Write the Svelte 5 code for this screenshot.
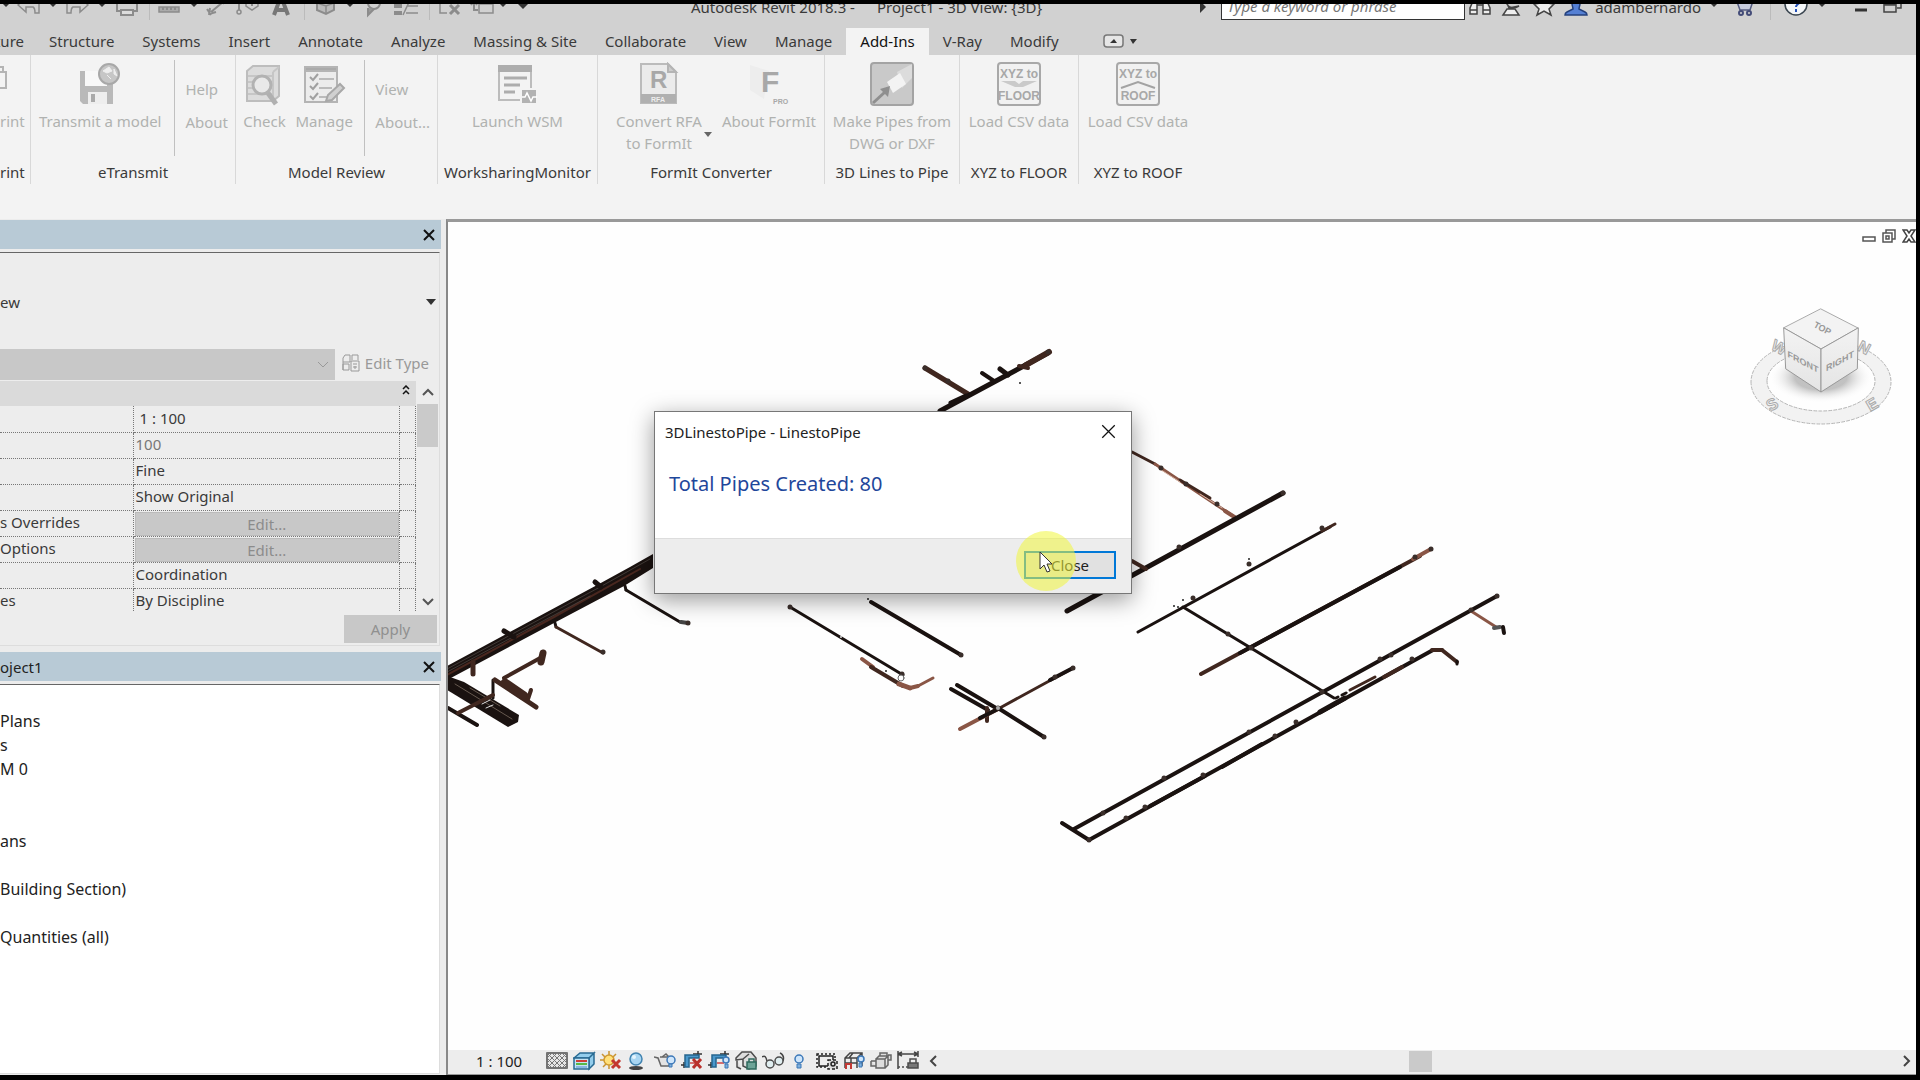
<script>
	const quickTools = [
		{ name: 'caret', width: 12, label: 'Save options' },
		{ name: 'undo', width: 34, label: 'Undo' },
		{ name: 'caret', width: 14, label: 'Undo list' },
		{ name: 'redo', width: 34, label: 'Redo' },
		{ name: 'caret', width: 16, label: 'Redo list' },
		{ name: 'print', width: 34, label: 'Print' },
		{ name: 'rule', width: 10 },
		{ name: 'measure', width: 30, label: 'Measure' },
		{ name: 'caret', width: 20, label: 'Measure options' },
		{ name: 'dimension', width: 22, label: 'Aligned dimension' },
		{ name: 'tag', width: 42, label: 'Tag by category' },
		{ name: 'letter', width: 26, label: 'Text' },
		{ name: 'rule', width: 20 },
		{ name: 'cube', width: 24, label: 'Default 3D view' },
		{ name: 'caret', width: 24, label: '3D view options' },
		{ name: 'section', width: 22, label: 'Section' },
		{ name: 'thin', width: 44, label: 'Thin lines' },
		{ name: 'rule', width: 2 },
		{ name: 'closeHidden', width: 40, label: 'Close hidden windows' },
		{ name: 'switch', width: 24, label: 'Switch windows' },
		{ name: 'caret', width: 18, label: 'Window list' },
		{ name: 'bigCaret', width: 22, label: 'Customize toolbar' }
	];

	const tabs = [
		'Structure',
		'Systems',
		'Insert',
		'Annotate',
		'Analyze',
		'Massing & Site',
		'Collaborate',
		'View',
		'Manage',
		'Add-Ins',
		'V-Ray',
		'Modify'
	];
	let activeTab = $state('Add-Ins');

	const panels = [
		{ title: 'rint', width: 31, cut: true, tools: [{ icon: 'batch', lines: ['rint'] }] },
		{
			title: 'eTransmit',
			width: 205,
			tools: [{ icon: 'floppy', lines: ['Transmit a model'] }],
			links: ['Help', 'About']
		},
		{
			title: 'Model Review',
			width: 202,
			tools: [
				{ icon: 'check', lines: ['Check'] },
				{ icon: 'manage', lines: ['Manage'] }
			],
			links: ['View', 'About...']
		},
		{ title: 'WorksharingMonitor', width: 160, tools: [{ icon: 'wsm', lines: ['Launch WSM'] }] },
		{
			title: 'FormIt Converter',
			width: 227,
			tools: [
				{ icon: 'rfa', lines: ['Convert RFA', 'to FormIt'], menu: true },
				{ icon: 'formit', lines: ['About FormIt'] }
			]
		},
		{
			title: '3D Lines to Pipe',
			width: 135,
			tools: [{ icon: 'pipe', lines: ['Make Pipes from', 'DWG or DXF'] }]
		},
		{ title: 'XYZ to FLOOR', width: 119, tools: [{ icon: 'floor', lines: ['Load CSV data'] }] },
		{ title: 'XYZ to ROOF', width: 118, last: true, tools: [{ icon: 'roof', lines: ['Load CSV data'] }] }
	];

	const properties = [
		{ label: '', value: '1 : 100', inset: true },
		{ label: '', value: '100', muted: true },
		{ label: '', value: 'Fine' },
		{ label: '', value: 'Show Original' },
		{ label: 's Overrides', edit: true },
		{ label: 'Options', edit: true },
		{ label: '', value: 'Coordination' },
		{ label: 'es', value: 'By Discipline' }
	];

	const tree = ['', 'Plans', 's', 'M 0', '', '', 'ans', '', 'Building Section)', '', 'Quantities (all)'];

	const viewControls = [
		'detail',
		'style',
		'sun',
		'shadow',
		'render',
		'cropOff',
		'crop',
		'locked',
		'glasses',
		'reveal',
		'worksharing',
		'analytical',
		'displace',
		'constraints'
	];

	// [x1, y1, x2, y2, thickness, colour]
	const dark = '#1a1210';
	const brown = '#40271f';
	const rust = '#8a5646';
	const pipes = [
		[925, 368, 968, 394, 5, brown],
		[940, 411, 1048, 353, 5, dark],
		[1026, 365, 1049, 352, 6, brown],
		[982, 373, 994, 381, 4, dark],
		[1000, 369, 1008, 375, 5, dark],
		[951, 403, 966, 396, 5, dark],
		[1019, 366, 1028, 368, 4, brown],
		[595, 582, 601, 587, 5, dark],
		[504, 631, 514, 637, 5, dark],
		[625, 586, 626, 590, 3, dark],
		[626, 590, 680, 622, 3, dark],
		[681, 622, 688, 623, 4, '#444'],
		[555, 623, 556, 627, 3, dark],
		[556, 627, 603, 653, 3, brown],
		[473, 662, 473, 674, 5, brown],
		[543, 653, 541, 662, 7, brown],
		[542, 657, 504, 678, 4, brown],
		[493, 680, 493, 698, 3, dark],
		[495, 680, 536, 707, 5, brown],
		[505, 683, 524, 696, 9, brown],
		[528, 699, 531, 690, 4, brown],
		[448, 708, 477, 725, 4, dark],
		[458, 713, 493, 695, 4, brown],
		[790, 607, 903, 675, 3, dark],
		[871, 602, 961, 655, 4, dark],
		[862, 659, 873, 667, 4, rust],
		[871, 667, 903, 686, 4, brown],
		[899, 684, 910, 688, 5, rust],
		[910, 688, 918, 686, 4, rust],
		[918, 686, 933, 678, 3, rust],
		[951, 689, 988, 710, 4, dark],
		[957, 685, 996, 708, 4, dark],
		[987, 708, 987, 721, 4, brown],
		[960, 729, 998, 709, 4, rust],
		[980, 718, 998, 709, 4, dark],
		[998, 709, 1073, 668, 3, brown],
		[1050, 680, 1073, 668, 4, dark],
		[998, 708, 1044, 737, 4, dark],
		[1132, 452, 1155, 464, 3, brown],
		[1155, 464, 1236, 518, 3, rust],
		[1180, 480, 1210, 498, 3, brown],
		[1225, 511, 1236, 518, 4, rust],
		[1067, 611, 1283, 493, 5, dark],
		[1132, 561, 1146, 569, 4, brown],
		[1138, 632, 1330, 527, 3, dark],
		[1322, 531, 1335, 524, 3, brown],
		[1201, 674, 1420, 556, 4, brown],
		[1240, 653, 1400, 567, 4, dark],
		[1413, 559, 1431, 549, 4, rust],
		[1183, 607, 1334, 698, 3, dark],
		[1336, 698, 1338, 697, 3, dark],
		[1342, 695, 1346, 693, 3, dark],
		[1350, 690, 1375, 677, 3, brown],
		[1074, 829, 1497, 596, 4, dark],
		[1062, 823, 1089, 840, 4, dark],
		[1089, 840, 1433, 650, 4, dark],
		[1150, 806, 1205, 776, 4, dark],
		[1222, 767, 1262, 744, 4, dark],
		[1320, 712, 1345, 698, 5, dark],
		[1384, 677, 1402, 667, 4, brown],
		[1432, 650, 1442, 650, 4, brown],
		[1442, 650, 1457, 662, 4, brown],
		[1457, 661, 1457, 664, 3, dark],
		[1471, 611, 1496, 627, 3, rust],
		[1494, 628, 1500, 627, 4, '#555'],
		[1503, 627, 1504, 633, 4, dark]
	];
	const fittings = [
		[925, 368], [1048, 352], [948, 381], [688, 623], [603, 652], [790, 607], [961, 655], [902, 674],
		[998, 708], [1044, 737], [1073, 668], [1055, 677], [1161, 468], [1186, 484], [1217, 504], [1283, 493],
		[1179, 547], [1249, 564], [1322, 528], [1193, 598], [1228, 634], [1251, 648], [1431, 549], [1415, 557],
		[1322, 692], [1380, 659], [1391, 655], [1497, 596], [1471, 610], [1164, 778], [1249, 732], [1103, 813],
		[1296, 722], [1275, 736], [1203, 775], [1145, 807], [1126, 818], [1089, 840], [1412, 659]
	];
	const specks = [[1020, 383], [868, 599], [1183, 600], [1174, 606], [886, 671], [1178, 607], [1249, 559]];

	let dialogOpen = $state(true);
</script>

{#snippet cross(size, weight)}
	<svg width={size} height={size} viewBox="0 0 12 12" aria-hidden="true">
		<path d="M1 1l10 10M11 1L1 11" fill="none" stroke="#111" stroke-width={weight} />
	</svg>
{/snippet}

{#snippet quickIcon(name)}
	{#if name === 'caret' || name === 'bigCaret'}
		<svg width="12" height="26" viewBox="0 0 12 26">
			<path d={name === 'caret' ? 'M2 9h8l-4 4z' : 'M0 9h12l-6 6z'} fill="#333" />
		</svg>
	{:else}
		<svg width="24" height="26" viewBox="0 0 24 26" fill="none" stroke="#8c8c8c" stroke-width="2">
			{#if name === 'undo'}
				<path d="M8 4l-7 7 8 7v-5h7c2 1 2 4 2 6h4V9H9z" stroke-width="1.5" />
			{:else if name === 'redo'}
				<path d="M16 4l7 7-8 7v-5H8c-2 1-2 4-2 6H2V9h13z" stroke-width="1.5" />
			{:else if name === 'print'}
				<path d="M5 8V3h14v5M2 8h20v9H2z" /><path d="M6 16h12v5H6z" fill="#ddd" />
			{:else if name === 'measure'}
				<path d="M2 13h20v5H2z" fill="#aaa" stroke-width="1.5" /><path d="M2 8h20M6 13v3M10 13v3M14 13v3M18 13v3" />
			{:else if name === 'dimension'}
				<path d="M20 8L8 18M6 21l1-7M6 20l7-2M18 6l3 4M4 15l4 6" />
			{:else if name === 'tag'}
				<path d="M4 16V9M4 9l5-4" /><circle cx="4" cy="18" r="2" stroke-width="1.5" /><path d="M17 4l6 4v4l-6 4-6-4V8z" stroke-width="1.5" /><path d="M17 9v3" />
			{:else if name === 'letter'}
				<path d="M5 21L11 5h2l6 16M7 16h10" stroke="#777" stroke-width="4" />
			{:else if name === 'cube'}
				<path d="M3 7l9-3 8 3v9l-8 4-9-4z" fill="#bbb" /><path d="M3 9l9 3 8-3M12 12v8" stroke-width="1.5" />
			{:else if name === 'section'}
				<circle cx="13" cy="9" r="6" /><path d="M7 14v7l6-6" fill="#999" />
			{:else if name === 'thin'}
				<path d="M0 12h8M0 19h8" stroke-width="4" /><path d="M13 12h11M12 19h12M16 6L9 21" stroke-width="1.5" />
			{:else if name === 'closeHidden'}
				<path d="M9 19H2V9h4M6 9h16" stroke-width="1.5" /><path d="M12 11l9 9M21 11l-9 9" stroke-width="3" />
			{:else if name === 'switch'}
				<path d="M9 10h14v9H9z" stroke-width="1.5" /><path d="M4 8v8h4M1 11l3-4 3 4" />
			{:else if name === 'binoculars'}
				<path d="M2 20v-6l3-7h4v13zM15 20V7h4l3 7v6zM9 11h6M2 16h7M15 16h7" stroke="#444" fill="#eee" stroke-width="1.5" />
			{:else if name === 'dish'}
				<path d="M3 21l4-6h8l4 6zM9 14l-3-7c1 6 6 9 13 5zM12 9l5-3" stroke="#444" fill="#eee" stroke-width="1.5" />
			{:else if name === 'star'}
				<path d="M12 2l3 7 7 1-5 5 2 6-7-4-7 4 2-6-5-5 7-1z" stroke="#444" fill="#eee" stroke-width="1.5" />
			{:else if name === 'person'}
				<path d="M8 9c0-6 8-6 8 0 0 3-1 4-1 6l6 3c2 1 2 3 2 3H1s0-2 2-3l6-3c0-2-1-3-1-6z" stroke="#24407c" fill="#5580d4" stroke-width="1.5" />
			{:else if name === 'cart'}
				<path d="M1 5h3l4 11h10l3-9H5" stroke="#555c80" fill="#c7cbdc" stroke-width="1.5" /><circle cx="9" cy="19" r="2" stroke="#444c78" /><circle cx="17" cy="19" r="2" stroke="#444c78" />
			{:else if name === 'help'}
				<circle cx="12" cy="10" r="11" stroke="#3b4650" fill="#f4f6f8" stroke-width="1.5" /><path d="M8 8c0-5 8-5 8-1 0 3-4 3-4 6M12 15v3" stroke="#2450b8" />
			{:else if name === 'minimize'}
				<path d="M6 16h12" stroke="#333" stroke-width="3" />
			{:else if name === 'restore'}
				<path d="M3 10h12v8H3zM3 11h12M8 8V6h12v8h-4" stroke="#444" stroke-width="1.5" />
			{/if}
		</svg>
	{/if}
{/snippet}

{#snippet ribbonIcon(name)}
	<svg width="44" height="44" viewBox="0 0 44 44" fill="none" stroke="#b4b4b4" stroke-width="2">
		{#if name === 'batch'}
			<path d="M-2 10h8v16h-8M-2 10V5h5v5" />
		{:else if name === 'floppy'}
			<path d="M2 9h27l6 6v27H5l-3-3z" fill="#b9b9b9" stroke="none" /><path d="M7 9h22v15H7z" fill="#f8f8f8" stroke="none" /><path d="M10 30h19v12H10z" fill="#eee" stroke="none" /><path d="M13 32h4v8h-4z" fill="#aaa" stroke="none" /><circle cx="31" cy="12" r="10" fill="#c6c6c6" stroke="#a8a8a8" /><path d="M25 9l6-4 3 4-5 2zM29 13l4 4M36 7l3 7-3-2z" fill="#eee" stroke="#eee" stroke-width="1" />
		{:else if name === 'check'}
			<path d="M5 9l6-5h26v30l-6 5H5z" fill="#dcdcdc" stroke="#bdbdbd" /><path d="M6 14h24M6 20h24M6 26h24M6 32h24M31 10v28M31 10l6-5" stroke="#c6c6c6" /><circle cx="20" cy="23" r="9" fill="#e9e9e9" stroke="#b2b2b2" stroke-width="3" /><path d="M26 31l8 11" stroke="#b0b0b0" stroke-width="5" />
		{:else if name === 'manage'}
			<path d="M3 5h32v35H3z" fill="#ececec" /><path d="M3 5h32v4H3z" fill="#aaa" /><path d="M8 15l3 3 5-6M8 24l3 3 5-6M8 34l3 3 5-6" stroke="#a0a0a0" /><path d="M17 17h15M17 26h13M17 35h8" stroke="#bbb" /><path d="M24 39l2-6 12-11 4 4-12 12z" fill="#d0d0d0" stroke="#a8a8a8" />
		{:else if name === 'wsm'}
			<path d="M4 4h32v34H4z" fill="#f3f3f3" stroke="#bcbcbc" /><path d="M4 4h32v5H4z" fill="#adadad" stroke="#adadad" /><path d="M9 16h23M9 23h16M9 30h11" stroke="#adadad" stroke-width="3" /><path d="M26 27h16v15H26z" fill="#b2b2b2" stroke="#f3f3f3" /><path d="M27 35h3l2-4 4 8 2-4h4" stroke="#fff" stroke-width="1.5" />
		{:else if name === 'rfa'}
			<path d="M4 2h27l8 8v31H4z" fill="#ebebeb" stroke="#bbb" /><path d="M31 2v8h8z" fill="#ccc" /><path d="M4 32h35v9H4z" fill="#b0b0b0" stroke="none" /><text x="13" y="26" class="glyph r">R</text><text x="14" y="40" class="glyph tiny light">RFA</text>
		{:else if name === 'formit'}
			<path d="M3 3l19 6-5 28L3 28z" fill="#ededed" stroke="none" /><text x="14" y="30" class="glyph f">F</text><text x="26" y="42" class="glyph tiny">PRO</text>
		{:else if name === 'pipe'}
			<rect x="1" y="1" width="42" height="42" rx="3" fill="#c9c9c9" stroke="#a3a3a3" /><path d="M27 10L42 2v14L32 26z" fill="#dcdcdc" stroke="none" /><path d="M17 20l13-9 6 11-13 9z" fill="#f3f3f3" stroke="none" /><path d="M3 41l12-11" stroke="#8f8f8f" stroke-width="3" /><path d="M20 24l-2 11-8-8z" fill="#8f8f8f" stroke="none" />
		{:else}
			<rect x="1" y="1" width="42" height="42" rx="3" fill="#f1f1f1" stroke="#a8a8a8" /><text x="22" y="16" class="glyph word" text-anchor="middle">XYZ to</text><text x="22" y="38" class="glyph word" text-anchor="middle">{name === 'floor' ? 'FLOOR' : 'ROOF'}</text>
			{#if name === 'floor'}
				<path d="M4 19h14l4 3 4-3h14l-14 6h-8z" fill="#cacaca" stroke="none" />
			{:else}
				<path d="M5 26l17-6 17 6" stroke="#a3a3a3" />
			{/if}
		{/if}
	</svg>
{/snippet}

{#snippet viewIcon(name)}
	<svg width="23" height="20" viewBox="0 0 23 20" fill="none" stroke="#4c4c4c" stroke-width="1.5">
		{#if name === 'detail'}
			<path d="M1 2h20v15H1z" fill="#e6e6e6" /><path d="M1 7l5-5M1 12L11 2M1 17L16 2M6 17L21 2M11 17L21 7M16 17l5-5M16 2l5 5M11 2l10 10M6 2l15 15M1 2l15 15M1 7l10 10M1 12l5 5" stroke="#777" stroke-width="1" />
		{:else if name === 'style'}
			<path d="M1 7l6-5h14l-5 5zM16 7l5-5v11l-5 5z" fill="#93cdec" stroke="#286a92" /><path d="M1 7h15v11H1z" fill="#c5e3f2" stroke="#286a92" /><path d="M3 10h11" stroke="#d03e38" stroke-width="2" /><path d="M3 13h11" stroke="#58b848" stroke-width="2" /><path d="M3 16h11" stroke="#4c8ad0" stroke-width="1" />
		{:else if name === 'sun'}
			<path d="M9 0v4M9 14v4M0 9h4M2 3l3 3M16 3l-3 3M3 16l3-3" stroke="#c89331" /><circle cx="9" cy="9" r="5" fill="#ffe07a" stroke="#d09a2f" /><path d="M12 9l8 8M20 9l-8 8" stroke="#c3372f" stroke-width="3" />
		{:else if name === 'shadow'}
			<ellipse cx="9" cy="17" rx="7" ry="2" fill="#444" stroke="none" /><circle cx="9" cy="8" r="6" fill="#a9d6f2" stroke="#4183b0" /><circle cx="7" cy="6" r="2" fill="#e5f4fc" stroke="none" />
		{:else if name === 'render'}
			<path d="M0 6l4 1 3 8h8l2-9H6M8 6l4-3 3 3" fill="#e3e3e3" stroke="#666" /><circle cx="17" cy="9" r="4" fill="#cfe6fb" stroke="#3c78b8" /><path d="M15 13h3v3h-3z" fill="#7fb0dc" stroke="#3c78b8" stroke-width="1" />
		{:else if name === 'cropOff' || name === 'crop'}
			<path d="M0 14h6M3 11v6M17 0v5M12 3h9" stroke="#333" /><path d="M4 16V4h14v3H8v9z" fill="#4a98cc" stroke="#26658f" /><path d="M9 12h7" stroke="#c44" />
			{#if name === 'cropOff'}
				<path d="M12 8l8 9M20 8l-8 9" stroke="#b9302b" stroke-width="3" />
			{:else}
				<circle cx="18" cy="9" r="3" fill="#cfe6fb" stroke="#3c78b8" /><path d="M17 13h3v4h-3z" fill="#7fb0dc" stroke="#3c78b8" stroke-width="1" />
			{/if}
		{:else if name === 'locked'}
			<path d="M1 7l6-6h9l5 6v8l-7 3-6-3V8l-7 1zM2 8v8l4 2M8 8l6-5" fill="#ddd" /><path d="M12 11h9v7h-9z" fill="#6da397" stroke="#2f6a5e" /><path d="M14 11V8h5v3" stroke="#2f6a5e" />
		{:else if name === 'glasses'}
			<path d="M0 6c3-2 4 0 5 4M18 2c4 2 4 5 3 8" stroke="#444" /><circle cx="8" cy="13" r="4" fill="#e0eef0" /><circle cx="17" cy="10" r="4" fill="#e0eef0" />
		{:else if name === 'reveal'}
			<circle cx="10" cy="8" r="4" fill="#cfe6fb" stroke="#3c78b8" /><path d="M8 13h4v4H8z" fill="#7fb0dc" stroke="#3c78b8" stroke-width="1" />
		{:else if name === 'worksharing'}
			<path d="M1 3h18v13H1z" stroke="#222" stroke-dasharray="2 2" /><path d="M3 5h14v10H3z" fill="#eee" stroke="#222" /><path d="M12 9h9v9h-9z" fill="#ddd" stroke="#222" stroke-dasharray="3 2" /><circle cx="17" cy="13" r="2" stroke="#222" />
		{:else if name === 'analytical'}
			<path d="M2 17V7l5-5h12v13M2 7h12l5-5M8 7v10M14 7v10M2 12h12M10 2L6 7" stroke="#444" /><path d="M3 18v-6M8 18v-6M3 13h5" stroke="#c23a35" stroke-width="2" /><circle cx="18" cy="8" r="3" fill="#cfe6fb" stroke="#3c78b8" /><path d="M16 12h3v4h-3z" fill="#7fb0dc" stroke="#3c78b8" stroke-width="1" />
		{:else if name === 'displace'}
			<path d="M6 8h9v9H6zM6 8l3-3h9l-3 3M18 5v9l-3 3M1 10h5M1 10v5h5M10 5V2h7v3M18 4h3v5h-3" fill="#ddd" stroke="#666" />
		{:else}
			<path d="M1 0v18M21 0v6M1 3h20M1 3l4-2M1 3l4 2M21 3l-4-2M21 3l-4 2" stroke="#444" /><path d="M1 16h10" stroke-dasharray="2 2" /><path d="M11 12h10v5H11z" fill="#777" /><path d="M13 12V8h6v4" />
		{/if}
	</svg>
{/snippet}

<div class="app">
	<header>
		<div class="titlebar">
			<div class="title-row">
				<div class="quick-access">
					{#each quickTools as tool}
						{#if tool.name === 'rule'}
							<span class="rule" style:width="{tool.width}px"></span>
						{:else}
							<button aria-label={tool.label} style:width="{tool.width}px">{@render quickIcon(tool.name)}</button>
						{/if}
					{/each}
				</div>
				<h1><span>Autodesk Revit 2018.3 -</span><span>Project1 - 3D View: {'{3D}'}</span></h1>
				<svg class="expand" width="8" height="12" viewBox="0 0 8 12"><path d="M1 0l6 6-6 6z" fill="#333" /></svg>
				<input class="search" type="text" placeholder="Type a keyword or phrase" aria-label="Search" />
				<div class="info">
					<button aria-label="Search help">{@render quickIcon('binoculars')}</button>
					<button aria-label="Communication center">{@render quickIcon('dish')}</button>
					<button aria-label="Favorites">{@render quickIcon('star')}</button>
					<button class="account">{@render quickIcon('person')}<span>adambernardo</span>{@render quickIcon('caret')}</button>
					<button aria-label="App store">{@render quickIcon('cart')}</button>
					<span class="rule"></span>
					<button class="help" aria-label="Help">{@render quickIcon('help')}{@render quickIcon('caret')}</button>
				</div>
				<div class="window-buttons">
					<button aria-label="Minimize">{@render quickIcon('minimize')}</button>
					<button aria-label="Restore">{@render quickIcon('restore')}</button>
				</div>
			</div>
		</div>

		<nav class="tabs">
			<button class="first">ture</button>
			{#each tabs as tab}
				<button class:active={tab === activeTab} onclick={() => (activeTab = tab)}>{tab}</button>
			{/each}
			<button class="ribbon-toggle" aria-label="Minimize ribbon">
				<svg width="36" height="14" viewBox="0 0 36 14">
					<rect x="1" y="1" width="19" height="12" rx="3" fill="#e6e6e6" stroke="#777" stroke-width="1.5" />
					<path d="M7 9h7l-3-4zM27 5h7l-4 5z" fill="#333" />
				</svg>
			</button>
		</nav>
	</header>

	<section class="ribbon">
		{#each panels as panel}
			<div class="panel" class:cut={panel.cut} class:last={panel.last} style:width="{panel.width}px">
				<div class="panel-body">
					<div class="tools" class:beside={panel.links}>
						{#each panel.tools as tool}
							<button class="tool" class:has-menu={tool.menu} disabled>
								{@render ribbonIcon(tool.icon)}
								<span class="tool-label">
									{#each tool.lines as line}<span>{line}</span>{/each}
								</span>
								{#if tool.menu}
									<svg class="menu" width="8" height="5" viewBox="0 0 8 5"><path d="M0 0h8L4 5z" fill="#666" /></svg>
								{/if}
							</button>
						{/each}
					</div>
					{#if panel.links}
						<div class="links">
							{#each panel.links as link}<button disabled>{link}</button>{/each}
						</div>
					{/if}
				</div>
				<div class="panel-title">{panel.title}</div>
			</div>
		{/each}
	</section>

	<main>
		<aside>
			<section class="palette">
				<div class="palette-title">
					<span></span>
					<button aria-label="Close properties">{@render cross(12, 2)}</button>
				</div>
				<div class="palette-body">
					<button class="type-selector">
						<span>ew</span>
						<svg width="10" height="6" viewBox="0 0 10 6"><path d="M0 0h10L5 6z" fill="#333" /></svg>
					</button>
					<div class="filter">
						<div class="filter-select">
							<select disabled aria-label="Filter"><option></option></select>
							<svg width="10" height="6" viewBox="0 0 10 6"><path d="M0 0l5 5 5-5" fill="none" stroke="#999" /></svg>
						</div>
						<button class="edit-type" disabled>
							<svg width="18" height="18" viewBox="0 0 18 18" fill="none" stroke="#999">
								<path d="M1 4l2-3h5v7H1zM10 1h6v5M10 1v5M1 10h6v6H1zM1 8v8" />
								<path d="M9 7h8v10H9zM11 10h4M11 13h4M13 12v3" />
							</svg>
							<span>Edit Type</span>
						</button>
					</div>
					<div class="grid-area">
						<div class="grid">
							<div class="group">
								<svg width="8" height="10" viewBox="0 0 8 10"><path d="M1 4l3-3 3 3M1 9l3-3 3 3" fill="none" stroke="#111" stroke-width="1.5" /></svg>
							</div>
							<table>
								<tbody>
									{#each properties as row}
										<tr>
											<th scope="row">{row.label}</th>
											<td class:muted={row.muted} class:inset={row.inset} class:edit={row.edit}>
												{#if row.edit}<button disabled>Edit...</button>{:else}{row.value}{/if}
											</td>
											<td class="extra"></td>
										</tr>
									{/each}
								</tbody>
							</table>
						</div>
						<div class="scrollbar">
							<svg width="12" height="8" viewBox="0 0 12 8"><path d="M1 7l5-5 5 5" fill="none" stroke="#555" stroke-width="2" /></svg>
							<div class="thumb"></div>
							<svg width="12" height="8" viewBox="0 0 12 8"><path d="M1 1l5 5 5-5" fill="none" stroke="#555" stroke-width="2" /></svg>
						</div>
					</div>
					<div class="apply"><button disabled>Apply</button></div>
				</div>
			</section>

			<section class="palette browser">
				<div class="palette-title">
					<span>oject1</span>
					<button aria-label="Close project browser">{@render cross(12, 2)}</button>
				</div>
				<ul>
					{#each tree as node}<li>{node}</li>{/each}
				</ul>
			</section>
		</aside>

		<section class="view">
			<div class="canvas">
				<svg class="model" width="1468" height="828" viewBox="448 222 1468 828" stroke-linecap="round">
					<defs>
						<radialGradient id="cube-shadow">
							<stop offset="50%" stop-color="#999" stop-opacity="0.6" />
							<stop offset="100%" stop-color="#fff" stop-opacity="0" />
						</radialGradient>
						<linearGradient id="face" x1="0" y1="0" x2="0" y2="1">
							<stop offset="0" stop-color="#f3f3f3" />
							<stop offset="1" stop-color="#e4e4e4" />
						</linearGradient>
					</defs>
					<path d="M447 666L599 584 630 567 653 554V568L624 586 554 623 447 680z" fill={dark} />
					<path d="M447 675L554 617 640 569" fill="none" stroke="#49271f" stroke-width="2" />
					<path d="M447 669L600 587 650 559M447 672L590 596" fill="none" stroke="#5b5550" stroke-width="1" opacity="0.6" />
					<path d="M447 676L464 682 519 715 518 722 508 727 447 690z" fill={dark} />
					<path d="M455 684L512 719M470 688L500 706" stroke="#66594f" stroke-width="1" />
					<path d="M482 704l8-4M486 708l7-3" stroke="#ddd" stroke-width="1" />
					{#each pipes as [x1, y1, x2, y2, weight, color]}
						<line {x1} {y1} {x2} {y2} stroke={color} stroke-width={weight} />
					{/each}
					<path d="M1158 468L1180 482M1200 494L1222 508" stroke="#d9b5a5" stroke-width="1" />
					{#each fittings as [cx, cy]}
						<circle {cx} {cy} r="2.5" fill="#3a2e2a" />
					{/each}
					{#each specks as [cx, cy]}
						<circle {cx} {cy} r="1" fill="#222" />
					{/each}
					<circle cx="901" cy="678" r="3" fill="#fff" stroke="#666" />
					<circle cx="841" cy="637" r="1" fill="#ddd" />
					<circle cx="998" cy="708" r="2" fill="#aaa" />

					<g class="view-cube" stroke-linejoin="round">
						<path
							d="M1751 382a70 42 0 1 0 140 0a70 42 0 1 0-140 0zM1767 381a54 30 0 1 0 108 0a54 30 0 1 0-108 0z"
							fill="#f2f2f2"
							fill-rule="evenodd"
							stroke="#b5b5b5"
							stroke-dasharray="3 2"
						/>
						<ellipse cx="1821" cy="377" rx="52" ry="26" fill="url(#cube-shadow)" />
						<text x="1779" y="353" transform="rotate(28 1779 348)">W</text>
						<text x="1864" y="353" transform="rotate(28 1864 348)">N</text>
						<text x="1772" y="410" transform="rotate(-30 1772 404)">S</text>
						<text x="1872" y="410" transform="rotate(-30 1872 404)">E</text>
						<path d="M1821 309L1858 328 1821 349 1784 328z" fill="#f3f3f3" stroke="#aaa" />
						<path d="M1784 328L1821 349V392L1786 369z" fill="url(#face)" stroke="#999" />
						<path d="M1858 328L1821 349V392L1857 369z" fill="url(#face)" stroke="#999" />
						<text class="face" transform="translate(1821 331) rotate(28)">TOP</text>
						<text class="face" transform="translate(1803 365) skewY(28)">FRONT</text>
						<text class="face" transform="translate(1840 364) skewY(-28)">RIGHT</text>
					</g>
				</svg>

				<div class="view-buttons">
					<button aria-label="Minimize view"><svg width="14" height="14" viewBox="0 0 14 14"><path d="M1 8h12v4H1z" fill="#fff" stroke="#555" stroke-width="1.5" /></svg></button>
					<button aria-label="Restore view"><svg width="14" height="14" viewBox="0 0 14 14" fill="#fff" stroke="#555" stroke-width="1.5"><path d="M4 1h9v9H4z" /><path d="M1 4h9v9H1zM4 7h3v3H4z" /></svg></button>
					<button aria-label="Close view"><svg width="14" height="14" viewBox="0 0 14 14"><path d="M1 1h4l2 3 2-3h4L9 7l4 6H9l-2-3-2 3H1l4-6z" fill="#fff" stroke="#444" stroke-width="1.5" /></svg></button>
				</div>

				{#if dialogOpen}
					<div class="dialog" role="dialog" aria-labelledby="dialog-title">
						<div class="dialog-title">
							<span id="dialog-title">3DLinestoPipe - LinestoPipe</span>
							<button aria-label="Close dialog" onclick={() => (dialogOpen = false)}>{@render cross(15, 1)}</button>
						</div>
						<p>Total Pipes Created: 80</p>
						<div class="dialog-footer">
							<button onclick={() => (dialogOpen = false)}>Close</button>
						</div>
					</div>
				{/if}
				<svg class="pointer" width="60" height="60" viewBox="0 0 60 60">
					<circle cx="30" cy="30" r="30" fill="#f0f53c" fill-opacity="0.55" />
					<path d="M24 21v17l4-4 3 7 3-1-3-7h5z" fill="#fff" stroke="#333" />
				</svg>
			</div>

			<footer>
				<button class="scale">1 : 100</button>
				<div class="view-controls">
					{#each viewControls as control}
						<button aria-label={control}>{@render viewIcon(control)}</button>
					{/each}
				</div>
				<div class="hscroll">
					<svg width="8" height="12" viewBox="0 0 8 12"><path d="M7 1L2 6l5 5" fill="none" stroke="#444" stroke-width="2" /></svg>
					<div class="thumb"></div>
					<svg width="8" height="12" viewBox="0 0 8 12"><path d="M1 1l5 5-5 5" fill="none" stroke="#444" stroke-width="2" /></svg>
				</div>
			</footer>
		</section>
	</main>
</div>

<style>
	:global(body) {
		margin: 0;
		background: #000;
	}

	.app {
		box-sizing: border-box;
		height: 100vh;
		padding: 4px 4px 5px 0;
		display: flex;
		flex-direction: column;
		overflow: hidden;
		background: #000;
		color: #3a3a3a;
		font-family: 'Noto Sans', 'Open Sans', sans-serif;
		font-size: 15px;
		line-height: 22px;
	}

	button,
	input,
	select {
		margin: 0;
		padding: 0;
		border: 0;
		background: none;
		color: inherit;
		font: inherit;
	}

	svg {
		display: block;
		flex: none;
	}

	header {
		background: #d1d1d1;
	}

	.titlebar {
		height: 24px;
		overflow: hidden;
	}

	.title-row {
		display: flex;
		align-items: center;
		height: 26px;
		margin-top: -10px;
	}

	.title-row button {
		display: flex;
		align-items: center;
		justify-content: center;
	}

	.quick-access {
		display: flex;
		height: 26px;
	}

	.rule {
		height: 26px;
		background: linear-gradient(#bbb, #bbb) center / 1px 100% no-repeat;
	}

	h1 {
		flex: 1;
		display: flex;
		justify-content: center;
		gap: 22px;
		margin: 0;
		padding-bottom: 1px;
		font-size: 15px;
		font-weight: 400;
		white-space: nowrap;
	}

	.expand {
		margin-right: 14px;
	}

	.search {
		box-sizing: border-box;
		width: 244px;
		height: 26px;
		padding: 0 5px 2px;
		border: 1px solid #333;
		background: #fff;
		font-style: italic;
	}

	.search::placeholder {
		color: #777;
		opacity: 1;
	}

	.info {
		display: flex;
		align-items: center;
		gap: 8px;
		padding-left: 3px;
	}

	.info .account {
		gap: 7px;
		margin-right: 4px;
	}

	.account span {
		padding-bottom: 1px;
	}

	.info .help {
		gap: 8px;
	}

	.info .rule {
		width: 12px;
	}

	.window-buttons {
		display: flex;
		gap: 8px;
		margin-left: 21px;
		padding-right: 11px;
	}

	.tabs {
		display: flex;
		height: 27px;
	}

	.tabs button {
		padding: 0 14px 2px;
		white-space: nowrap;
	}

	.tabs .first {
		display: flex;
		justify-content: flex-end;
		align-items: center;
		width: 35px;
		padding-left: 0;
		padding-right: 11px;
	}

	.tabs .active {
		background: #f3f3f3;
		color: #111;
	}

	.tabs .ribbon-toggle {
		padding-left: 30px;
	}

	.ribbon {
		display: flex;
		height: 164px;
		background: #f3f3f3;
	}

	.panel {
		box-sizing: border-box;
		flex: none;
		display: flex;
		flex-direction: column;
		height: 129px;
		border-right: 1px solid #d8d8d8;
	}

	.panel.last {
		border-right: 0;
	}

	.panel-body {
		flex: 1;
		display: flex;
		justify-content: center;
	}

	.tools {
		flex: 1;
		display: flex;
		justify-content: center;
		gap: 9px;
		padding-top: 7px;
	}

	.tools.beside {
		padding-right: 5px;
	}

	.tool {
		position: relative;
		flex: none;
		display: flex;
		flex-direction: column;
		align-items: center;
		justify-content: flex-start;
		gap: 4px;
		color: #b0b2b0;
	}

	.tool-label {
		display: flex;
		flex-direction: column;
		align-items: center;
		white-space: nowrap;
	}

	.tool .menu {
		position: absolute;
		right: -10px;
		top: 70px;
	}

	.tool.has-menu {
		margin: 0 11px 0 10px;
	}

	.links {
		display: flex;
		flex-direction: column;
		align-items: flex-start;
		gap: 11px;
		height: 96px;
		box-sizing: border-box;
		margin-top: 5px;
		padding: 18px 7px 0 10px;
		border-left: 1px solid #c0c0c0;
	}

	.links button {
		color: #b0b2b0;
	}

	.panel-title {
		padding-bottom: 1px;
		text-align: center;
		white-space: nowrap;
	}

	.cut {
		overflow: hidden;
	}

	.cut .panel-body,
	.cut .tools {
		justify-content: flex-start;
	}

	.cut .panel-title {
		text-align: left;
	}

	.cut .tool {
		align-items: flex-start;
	}

	.glyph {
		fill: #a8a8a8;
		stroke: none;
		font-family: 'Liberation Sans', sans-serif;
		font-weight: 700;
	}

	.glyph.r {
		font-size: 24px;
	}

	.glyph.f {
		font-size: 30px;
	}

	.glyph.tiny {
		font-size: 7px;
	}

	.glyph.light {
		fill: #eee;
	}

	.glyph.word {
		font-size: 12px;
	}

	main {
		flex: 1;
		min-height: 0;
		display: flex;
		background: #ececec;
	}

	aside {
		flex: 0 0 446px;
		display: flex;
		flex-direction: column;
		gap: 6px;
		padding-top: 1px;
	}

	.palette {
		margin-right: 5px;
	}

	.palette-title {
		display: flex;
		align-items: center;
		justify-content: space-between;
		height: 29px;
		margin-bottom: 3px;
		padding-right: 6px;
		background: #b8cad6;
		color: #222;
	}

	.palette-body {
		margin-right: 1px;
		border-top: 1px solid #666;
		border-right: 1px solid #ddd;
		border-bottom: 1px solid #ddd;
		background: #ededed;
	}

	.type-selector {
		display: flex;
		align-items: center;
		justify-content: space-between;
		width: 100%;
		height: 96px;
		padding-top: 1px;
		padding-right: 3px;
	}

	.filter {
		display: flex;
		align-items: center;
	}

	.filter-select {
		flex: 1;
		display: flex;
		align-items: center;
		height: 31px;
		padding-right: 7px;
		background: #c8c8c8;
	}

	.filter-select select {
		flex: 1;
		appearance: none;
	}

	.edit-type {
		display: flex;
		align-items: center;
		gap: 5px;
		padding: 0 10px 3px 7px;
		color: #999;
	}

	.grid-area {
		display: flex;
		gap: 1px;
		height: 231px;
		padding-top: 1px;
	}

	.grid {
		flex: 1;
		overflow: hidden;
	}

	.group {
		display: flex;
		justify-content: flex-end;
		height: 18px;
		padding: 4px 6px 3px;
		background: #dadada;
	}

	table {
		width: 100%;
		border-collapse: collapse;
		table-layout: fixed;
	}

	th,
	td {
		box-sizing: border-box;
		height: 26px;
		padding: 0 0 2px;
		border-right: 1px dotted #777;
		border-bottom: 1px dotted #777;
		font-weight: 400;
		text-align: left;
		white-space: nowrap;
	}

	th {
		width: 133px;
	}

	td {
		padding-left: 2px;
	}

	.extra {
		width: 16px;
	}

	.muted {
		color: #777;
	}

	.inset {
		padding-left: 6px;
	}

	.edit {
		padding: 1px 0 0 1px;
	}

	.edit button {
		display: block;
		width: 100%;
		height: 24px;
		padding-bottom: 2px;
		border: 1px solid #bbb;
		background: #c8c8c8;
		color: #8c8c8c;
	}

	.scrollbar {
		width: 21px;
		display: flex;
		flex-direction: column;
		align-items: center;
		padding: 7px 1px 6px 0;
	}

	.scrollbar .thumb {
		width: 21px;
		height: 43px;
		margin: 8px 0 auto;
		background: #cacaca;
	}

	.apply {
		display: flex;
		justify-content: flex-end;
		padding: 3px 2px 2px;
	}

	.apply button {
		width: 93px;
		height: 28px;
		background: #c8c8c8;
		color: #909090;
	}

	.browser {
		flex: 1;
		display: flex;
		flex-direction: column;
	}

	.browser .palette-title {
		flex: none;
	}

	ul {
		flex: 1;
		margin: 0 1px 1px 0;
		padding: 1px 0 0;
		border-top: 1px solid #666;
		border-right: 1px solid #ddd;
		border-bottom: 1px solid #ddd;
		background: #fff;
		color: #222;
		font-size: 16px;
		list-style: none;
	}

	li {
		height: 24px;
	}

	.view {
		flex: 1;
		min-width: 0;
		display: flex;
		flex-direction: column;
		border-top: 3px solid #999;
		border-left: 2px solid #888;
	}

	.canvas {
		position: relative;
		flex: 1;
		min-height: 0;
		overflow: hidden;
		background: #fefefe;
	}

	.model {
		position: absolute;
		left: 0;
		top: 0;
	}

	.view-cube text {
		fill: #eee;
		stroke: #aaa;
		font: 700 16px 'Liberation Sans', sans-serif;
		text-anchor: middle;
	}

	.view-cube .face {
		fill: #999;
		stroke: none;
		font-size: 9px;
	}

	.view-buttons {
		position: absolute;
		top: 7px;
		right: 0;
		display: flex;
		gap: 6px;
	}

	.dialog {
		position: absolute;
		left: 206px;
		top: 189px;
		box-sizing: border-box;
		width: 478px;
		border: 1px solid #777;
		background: #fff;
		box-shadow: 0 6px 22px rgba(0, 0, 0, 0.4);
		color: #222;
	}

	.dialog-title {
		box-sizing: border-box;
		display: flex;
		align-items: center;
		justify-content: space-between;
		height: 41px;
		padding: 0 15px 2px 10px;
	}

	p {
		margin: 0;
		padding: 17px 14px 40px;
		color: #1f479b;
		font-size: 20px;
		line-height: 28px;
	}

	.dialog-footer {
		display: flex;
		justify-content: flex-end;
		padding: 12px 15px 14px;
		border-top: 1px solid #ddd;
		background: #ededed;
	}

	.dialog-footer button {
		width: 92px;
		height: 28px;
		border: 2px solid #0078d7;
		background: #e1e1e1;
	}

	.pointer {
		position: absolute;
		left: 568px;
		top: 309px;
		pointer-events: none;
	}

	footer {
		box-sizing: border-box;
		display: flex;
		align-items: center;
		height: 25px;
		padding-bottom: 2px;
		border-bottom: 1px solid #999;
		background: #ededed;
		color: #222;
	}

	.scale {
		width: 98px;
		padding-left: 28px;
		text-align: left;
	}

	.view-controls {
		display: flex;
		gap: 4px;
	}

	.hscroll {
		flex: 1;
		display: flex;
		align-items: center;
		padding: 0 5px 0 9px;
	}

	.hscroll .thumb {
		width: 23px;
		height: 21px;
		margin: 0 auto;
		background: #cacaca;
	}
</style>
